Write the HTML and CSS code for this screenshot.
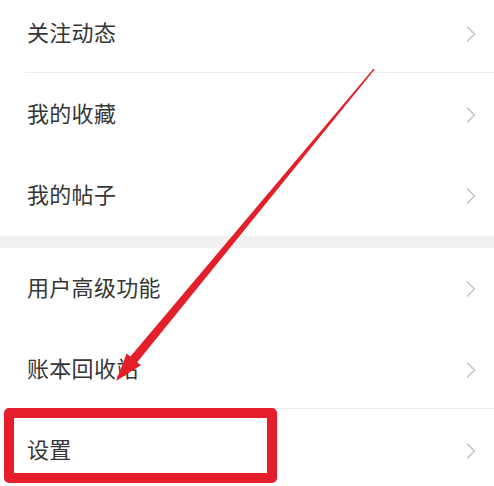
FILE: index.html
```html
<!DOCTYPE html>
<html lang="zh-CN">
<head>
<meta charset="utf-8">
<link rel="stylesheet" href="styles.css">
</head>
<body>
<div class="page">
  <div class="group first">
    <div class="row sep"><span class="label">关注动态</span><svg class="chev" viewBox="0 0 10 16"><polyline points="1.5,1 8.5,8 1.5,15"/></svg></div>
    <div class="row"><span class="label">我的收藏</span><svg class="chev" viewBox="0 0 10 16"><polyline points="1.5,1 8.5,8 1.5,15"/></svg></div>
    <div class="row"><span class="label">我的帖子</span><svg class="chev" viewBox="0 0 10 16"><polyline points="1.5,1 8.5,8 1.5,15"/></svg></div>
  </div>
  <div class="gap"></div>
  <div class="group">
    <div class="row"><span class="label">用户高级功能</span><svg class="chev" viewBox="0 0 10 16"><polyline points="1.5,1 8.5,8 1.5,15"/></svg></div>
    <div class="row sep"><span class="label">账本回收站</span><svg class="chev" viewBox="0 0 10 16"><polyline points="1.5,1 8.5,8 1.5,15"/></svg></div>
    <div class="row"><span class="label">设置</span><svg class="chev" viewBox="0 0 10 16"><polyline points="1.5,1 8.5,8 1.5,15"/></svg></div>
  </div>
  <div class="highlight"></div>
  <svg class="arrow" viewBox="0 0 494 486" width="494" height="486">
    <polygon points="373.4,68.7 374.6,69.5 137.2,362.2 140.9,365.3 116,381 126.7,353.6 130.4,356.6"/>
  </svg>
</div>
</body>
</html>
```

FILE: styles.css
```css
html, body {
  margin: 0;
  padding: 0;
  background: #ffffff;
}

.page {
  position: relative;
  width: 494px;
  height: 486px;
  overflow: hidden;
  font-family: "Noto Sans CJK SC", "Noto Sans", sans-serif;
  color: #363636;
}

.group.first {
  margin-top: -7px;
}

.row {
  height: 81px;
  box-sizing: border-box;
  display: flex;
  align-items: center;
  justify-content: space-between;
  padding: 0 18px 0 27px;
  position: relative;
}

.row.sep::after {
  content: "";
  position: absolute;
  left: 25px;
  right: 0;
  bottom: 1px;
  height: 1px;
  background: #ececec;
}

.label {
  font-size: 22px;
  line-height: 1;
  letter-spacing: 0.3px;
  margin-bottom: 5px;
}

.chev {
  width: 10px;
  height: 16px;
  fill: none;
  stroke: #c6c6c6;
  stroke-width: 1.6;
  stroke-linecap: round;
  stroke-linejoin: round;
}

.gap {
  height: 12px;
  background: #f1f1f1;
}

.highlight {
  position: absolute;
  left: 4px;
  top: 408px;
  width: 273px;
  height: 75px;
  box-sizing: border-box;
  border: 10px solid #e61e2b;
  border-radius: 5px;
}

.arrow {
  position: absolute;
  left: 0;
  top: 0;
  fill: #e3202a;
}
```
